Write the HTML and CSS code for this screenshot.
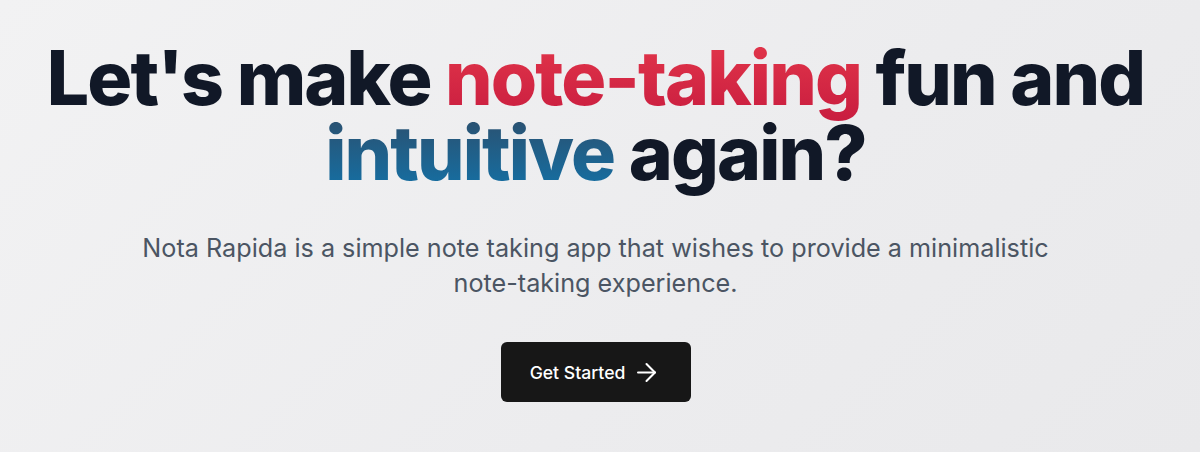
FILE: index.html
```html
<!DOCTYPE html>
<html lang="en">
<head>
<meta charset="utf-8">
<title>Nota Rapida</title>
<link rel="stylesheet" href="styles.css">
</head>
<body>
<main class="hero">
  <h1 class="title">Let's make <span class="red">note-taking</span> fun and <span class="blue">intuitive</span> again?</h1>
  <p class="lead">Nota Rapida is a simple note taking app that wishes to provide a minimalistic note-taking experience.</p>
  <a class="cta" href="#">Get Started
    <svg class="arrow" width="29" height="29" viewBox="0 0 24 24" fill="none" stroke="currentColor" stroke-width="1.7" stroke-linecap="round" stroke-linejoin="round"><path d="M5 12h14"/><path d="M12 5l7 7-7 7"/></svg>
  </a>
</main>
</body>
</html>
```
FILE: styles.css
```css
html, body {
  margin: 0;
  height: 100%;
}
body {
  background: linear-gradient(135deg, #f2f2f3 0%, #ececee 60%, #e9e9eb 100%);
  font-family: Inter, "Noto Sans", sans-serif;
}
.hero {
  display: flex;
  flex-direction: column;
  align-items: center;
  text-align: center;
  padding: 40px 9px 0 0;
}
.title {
  margin: 0;
  font-size: 75px;
  line-height: 75px;
  font-weight: 800;
  letter-spacing: -1.9px;
  color: #111827;
  max-width: 1120px;
}
.red {
  background: linear-gradient(to bottom, #e4384b, #c81c3f);
  -webkit-background-clip: text;
  background-clip: text;
  color: transparent;
}
.blue {
  background: linear-gradient(to bottom, #2e4c68, #1273aa);
  -webkit-background-clip: text;
  background-clip: text;
  color: transparent;
}
.lead {
  margin: 41px 0 0;
  font-size: 25.2px;
  line-height: 35px;
  color: #4b5563;
  max-width: 940px;
}
.cta {
  margin-top: 41px;
  display: inline-flex;
  align-items: center;
  gap: 7px;
  width: 190px;
  height: 60px;
  box-sizing: border-box;
  justify-content: center;
  background: #171717;
  color: #fff;
  border-radius: 6px;
  text-decoration: none;
  font-size: 17.6px;
  font-weight: 500;
}
.arrow {
  display: block;
}
```
